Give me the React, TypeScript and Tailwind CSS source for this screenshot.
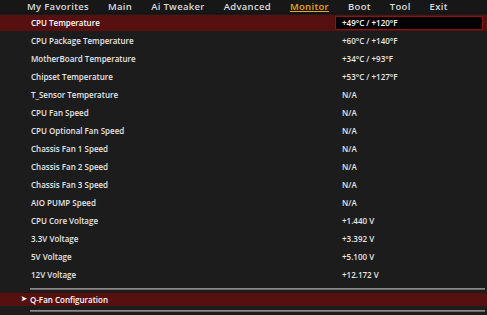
import React from 'react';

const TABS = ['My Favorites', 'Main', 'Ai Tweaker', 'Advanced', 'Monitor', 'Boot', 'Tool', 'Exit'];

const ROWS: [string, string][] = [
  ['CPU Temperature', '+49°C / +120°F'],
  ['CPU Package Temperature', '+60°C / +140°F'],
  ['MotherBoard Temperature', '+34°C / +93°F'],
  ['Chipset Temperature', '+53°C / +127°F'],
  ['T_Sensor Temperature', 'N/A'],
  ['CPU Fan Speed', 'N/A'],
  ['CPU Optional Fan Speed', 'N/A'],
  ['Chassis Fan 1 Speed', 'N/A'],
  ['Chassis Fan 2 Speed', 'N/A'],
  ['Chassis Fan 3 Speed', 'N/A'],
  ['AIO PUMP Speed', 'N/A'],
  ['CPU Core Voltage', '+1.440 V'],
  ['3.3V Voltage', '+3.392 V'],
  ['5V Voltage', '+5.100 V'],
  ['12V Voltage', '+12.172 V'],
];

function Separator() {
  return <div className="ml-[30px] mr-[2px] h-[2px] bg-gradient-to-b from-[#9a9a9a] to-[#5a5a5a]" />;
}

export default function App() {
  return (
    <div
      className="w-[487px] h-[315px] overflow-hidden bg-[#1c1c1c] text-[#e6e6e6]"
      style={{ fontFamily: '"Open Sans", "Liberation Sans", sans-serif' }}
    >
      <div className="flex h-[14px] items-start gap-[19px] border-b border-[#121212] bg-[#171717] pl-[27px] text-[9.5px] font-semibold leading-[13px] tracking-[0.3px]">
        {TABS.map((t) =>
          t === 'Monitor' ? (
            <span key={t} className="text-[#e8aa10] underline decoration-[1px] underline-offset-[1px]">
              {t}
            </span>
          ) : (
            <span key={t} className="text-[#dcdcdc]">
              {t}
            </span>
          ),
        )}
      </div>

      <div className="text-[8px] font-semibold">
        {ROWS.map(([label, value], i) =>
          i === 0 ? (
            <div key={label} className="flex h-[18px] items-center py-[1px]">
              <div className="flex h-full w-full items-center bg-[#561010]">
                <span className="w-[335px] pl-[31px] text-white">{label}</span>
                <span className="flex h-[14px] w-[148px] items-center border border-[#8a1414] bg-black pl-[6px] text-white">
                  {value}
                </span>
              </div>
            </div>
          ) : (
            <div key={label} className="flex h-[18px] items-center">
              <span className="w-[342px] pl-[31px]">{label}</span>
              <span>{value}</span>
            </div>
          ),
        )}
      </div>

      <div className="mt-[4px]">
        <Separator />
        <div className="mt-[3px] flex h-[13px] items-center bg-[#561010] text-[8px] font-semibold text-white">
          <span className="w-[30px] pl-[21px] text-[7px]">➤</span>
          <span>Q-Fan Configuration</span>
        </div>
        <div className="mt-[4px]">
          <Separator />
        </div>
      </div>
    </div>
  );
}
